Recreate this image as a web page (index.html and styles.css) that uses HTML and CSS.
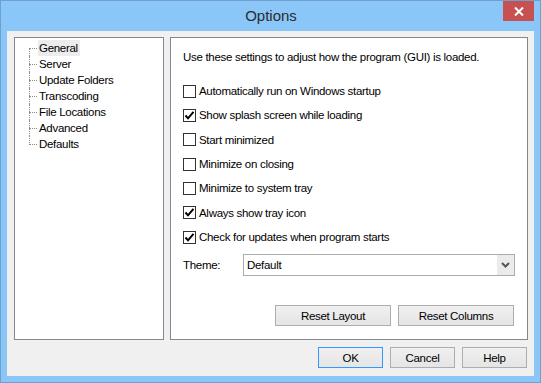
FILE: index.html
```html
<!DOCTYPE html>
<html lang="en">
<head>
  <meta charset="UTF-8" />
  <title>Options</title>
  <link rel="stylesheet" href="styles.css">
</head>
<body>

  <div class="window">
    <div class="titlebar">
      <span></span>
      <span class="title">Options</span>
      <div class="close">
        <svg width="10" height="9" viewBox="0 0 10 9"><path d="M1 0.5 L9 8.5 M9 0.5 L1 8.5" stroke="#fff" stroke-width="2"/></svg>
      </div>
    </div>

    <div class="client">
      <div class="panels">
        <!-- tree of pages -->
        <ul class="tree">
          <li><span class="node selected">General</span></li>
          <li><span class="node">Server</span></li>
          <li><span class="node">Update Folders</span></li>
          <li><span class="node">Transcoding</span></li>
          <li><span class="node">File Locations</span></li>
          <li><span class="node">Advanced</span></li>
          <li><span class="node">Defaults</span></li>
        </ul>

        <!-- General page -->
        <div class="page">
          <p class="intro">Use these settings to adjust how the program (GUI) is loaded.</p>

          <div class="checks">
            <label class="check"><span class="box"></span>Automatically run on Windows startup</label>
            <label class="check"><span class="box checked"><svg width="11" height="11" viewBox="0 0 11 11"><path d="M1.5 5.5 L4 8.3 L9.5 1.8" fill="none" stroke="#000" stroke-width="2"/></svg></span>Show splash screen while loading</label>
            <label class="check"><span class="box"></span>Start minimized</label>
            <label class="check"><span class="box"></span>Minimize on closing</label>
            <label class="check"><span class="box"></span>Minimize to system tray</label>
            <label class="check"><span class="box checked"><svg width="11" height="11" viewBox="0 0 11 11"><path d="M1.5 5.5 L4 8.3 L9.5 1.8" fill="none" stroke="#000" stroke-width="2"/></svg></span>Always show tray icon</label>
            <label class="check"><span class="box checked"><svg width="11" height="11" viewBox="0 0 11 11"><path d="M1.5 5.5 L4 8.3 L9.5 1.8" fill="none" stroke="#000" stroke-width="2"/></svg></span>Check for updates when program starts</label>
          </div>

          <div class="theme-row">
            <span class="theme-label">Theme:</span>
            <div class="combo">
              <span class="combo-text">Default</span>
              <span class="combo-arrow">
                <svg width="9" height="6" viewBox="0 0 9 6"><path d="M1 1 L4.5 4.5 L8 1" fill="none" stroke="#555" stroke-width="2"/></svg>
              </span>
            </div>
          </div>

          <div class="reset-row">
            <div class="btn wide">Reset Layout</div>
            <div class="btn wide">Reset Columns</div>
          </div>
        </div>
      </div>

      <div class="dialog-buttons">
        <div class="btn default">OK</div>
        <div class="btn">Cancel</div>
        <div class="btn">Help</div>
      </div>
    </div>
  </div>

</body>
</html>
```

FILE: styles.css
```css
body {
  margin: 0;
  font-family: "Liberation Sans", Arial, sans-serif;
  font-size: 11.5px;
  letter-spacing: -0.3px;
  color: #000;
  background: #fff;
}
.window {
  width: 541px;
  height: 383px;
  box-sizing: border-box;
  border: 1px solid #6f9fca;
  background: #8bc6f8;
  padding: 0 6px 6px;
  display: flex;
  flex-direction: column;
}
.titlebar {
  height: 30px;
  display: grid;
  grid-template-columns: 1fr auto 1fr;
  align-items: start;
}
.title {
  font-size: 15px;
  letter-spacing: 0;
  line-height: 30px;
  color: #2b2b2b;
  padding-left: 1px;
}
.close {
  justify-self: end;
  width: 31px;
  height: 20px;
  background: #c75050;
  display: flex;
  align-items: center;
  justify-content: center;
}
.client {
  flex: 1;
  background: #f0f0f0;
  padding: 6px 6px 8px 7px;
  display: flex;
  flex-direction: column;
}
.panels {
  height: 303px;
  display: flex;
  gap: 6px;
}
.tree {
  width: 150px;
  box-sizing: border-box;
  border: 1px solid #828790;
  background: #fff;
  margin: 0;
  padding: 2px 0 0;
  list-style: none;
}
.tree li {
  position: relative;
  height: 16px;
  line-height: 16px;
  padding-left: 23px;
}
.tree li::before {
  content: "";
  position: absolute;
  left: 14px;
  top: 8px;
  width: 8px;
  border-top: 1px dotted #8a8a8a;
}
.tree li::after {
  content: "";
  position: absolute;
  left: 14px;
  top: 0;
  height: 16px;
  border-left: 1px dotted #8a8a8a;
}
.tree li:first-child::after {
  top: 8px;
  height: 8px;
}
.tree li:last-child::after {
  height: 9px;
}
.node {
  display: inline-block;
  padding: 0 2px 0 1px;
}
.node.selected {
  background: #ececec;
}
.page {
  width: 358px;
  box-sizing: border-box;
  border: 1px solid #828790;
  background: #fff;
  padding: 11px 12px 0 12px;
  display: flex;
  flex-direction: column;
}
.intro {
  margin: 0;
  line-height: 16px;
}
.checks {
  margin-top: 14px;
  display: flex;
  flex-direction: column;
}
.check {
  height: 24.33px;
  display: flex;
  align-items: center;
  gap: 3px;
}
.box {
  width: 13px;
  height: 13px;
  box-sizing: border-box;
  border: 1px solid #333;
  background: #fff;
  display: flex;
  align-items: center;
  justify-content: center;
}
.theme-row {
  margin-top: 5px;
  display: flex;
  align-items: center;
}
.theme-label {
  width: 60px;
}
.combo {
  flex: 1;
  height: 22px;
  box-sizing: border-box;
  border: 1px solid #acacac;
  background: #fff;
  display: flex;
  align-items: center;
}
.combo-text {
  flex: 1;
  padding-left: 3px;
}
.combo-arrow {
  width: 17px;
  height: 20px;
  background: #ebebeb;
  display: flex;
  align-items: center;
  justify-content: center;
}
.reset-row {
  margin-top: 29px;
  display: flex;
  justify-content: flex-end;
  gap: 7px;
  padding-right: 1px;
}
.btn {
  width: 65px;
  height: 21px;
  box-sizing: border-box;
  border: 1px solid #adadad;
  background: linear-gradient(#f0f0f0, #e5e5e5);
  display: flex;
  align-items: center;
  justify-content: center;
}
.btn.wide {
  width: 116px;
}
.btn.default {
  border-color: #3399ff;
}
.dialog-buttons {
  margin-top: 7px;
  display: flex;
  justify-content: flex-end;
  gap: 7px;
  padding-right: 1px;
}
```
